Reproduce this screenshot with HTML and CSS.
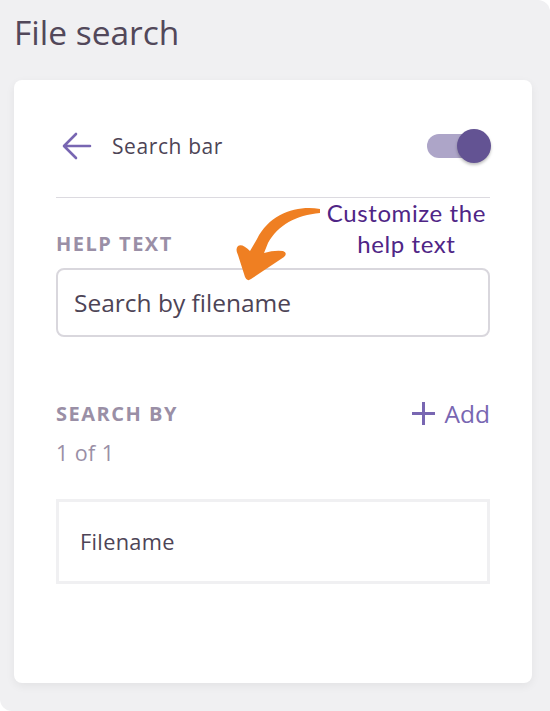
FILE: index.html
```html
<!DOCTYPE html>
<html lang="en">
<head>
	<meta charset="UTF-8">
	<title>File search</title>
	<link rel="stylesheet" href="styles.css">
</head>
<body>
	<div class="panel">
		<h1 class="title">File search</h1>
		<div class="card">
			<div class="head">
				<svg class="back" width="30" height="28" viewBox="0 0 30 28">
					<path d="M28 14H3M14 2L2 14l12 12" fill="none" stroke="#7866b2" stroke-width="2.6" stroke-linecap="round" stroke-linejoin="round"/>
				</svg>
				<span class="head-text">Search bar</span>
				<div class="toggle"><span class="knob"></span></div>
			</div>

			<div class="help">
				<div class="label">HELP TEXT</div>
				<div class="input">Search by filename</div>
				<div class="note">Customize the<br>help text</div>
				<svg class="curl" width="100" height="80" viewBox="0 0 100 80">
					<path d="M94 6C72 2 44 10 31 36L24 48Q16 40 12 43Q9 46 12 52L19 74Q21 79 25 76L58 54Q62 50 57 48Q48 47 38 50L42 40C52 22 70 12 94 10Z" fill="#ef7f22"/>
				</svg>
			</div>

			<div class="row">
				<div class="label">SEARCH BY</div>
				<div class="add">
					<svg width="25" height="25" viewBox="0 0 25 25">
						<path d="M12.5 1v23M1 12.5h23" stroke="#7866b2" stroke-width="3"/>
					</svg>
					<span>Add</span>
				</div>
			</div>
			<div class="count">1 of 1</div>
			<div class="item">Filename</div>
		</div>
	</div>
</body>
</html>
```

FILE: styles.css
```css
html *{
	padding:0;
	margin:0;
	box-sizing:border-box;
}
body{
	background:#fff;
	font-family:"Open Sans","Noto Sans",sans-serif;
	width:550px;
	height:711px;
	overflow:hidden;
}
.panel{
	background:#f0f0f2;
	width:550px;
	height:711px;
	border-radius:0 12px 0 12px;
	padding:10px 18px 0 14px;
}
.title{
	font-weight:400;
	font-size:33.5px;
	color:#52485a;
	line-height:44px;
}
.card{
	margin-top:26px;
	background:#fff;
	border-radius:8px;
	height:603px;
	padding:46px 42px 0 42px;
	box-shadow:0 3px 10px rgba(0,0,0,0.06);
}
.head{
	display:flex;
	align-items:center;
	height:40px;
}
.back{
	margin-left:6px;
}
.head-text{
	margin-left:20px;
	font-size:21px;
	color:#4d4456;
	letter-spacing:0.6px;
	flex:1;
}
.toggle{
	width:58px;
	height:24px;
	border-radius:12px;
	background:#ada5c8;
	position:relative;
	margin-right:5px;
}
.knob{
	position:absolute;
	width:34px;
	height:34px;
	border-radius:50%;
	background:#635393;
	right:-6px;
	top:-5px;
	box-shadow:0 2px 3px rgba(0,0,0,0.25);
}
.help{
	position:relative;
	border-top:1.5px solid #dcdae0;
	margin-top:31px;
	padding-top:34px;
}
.label{
	font-size:20px;
	font-weight:700;
	letter-spacing:1.5px;
	color:#9a8fa6;
	line-height:24px;
}
.input{
	margin-top:12px;
	height:69px;
	border:2px solid #d9d7dd;
	border-radius:8px;
	padding:0 16px;
	display:flex;
	align-items:center;
	font-size:24.5px;
	color:#4d4456;
}
.note{
	position:absolute;
	right:4px;
	top:-1px;
	text-align:center;
	font-family:"Lato","Noto Sans",sans-serif;
	font-size:24px;
	line-height:31px;
	color:#4f2586;
	letter-spacing:0.6px;
}
.curl{
	position:absolute;
	left:170px;
	top:5px;
}
.row{
	display:flex;
	align-items:center;
	justify-content:space-between;
	margin-top:60px;
}
.add{
	display:flex;
	align-items:center;
	gap:9px;
	color:#7866b2;
	font-size:24.5px;
}
.count{
	margin-top:8px;
	font-size:21.5px;
	color:#9a8fa6;
	letter-spacing:0.4px;
}
.item{
	margin-top:32px;
	height:85px;
	border:3px solid #f0f0f2;
	display:flex;
	align-items:center;
	padding-left:21px;
	font-size:21.8px;
	color:#4d4456;
	letter-spacing:0.3px;
}
```
